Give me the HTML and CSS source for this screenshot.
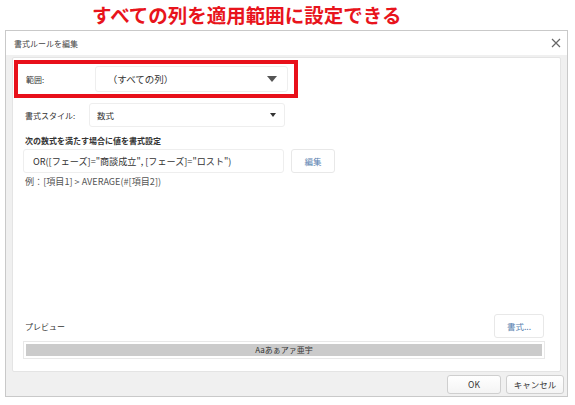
FILE: index.html
```html
<!DOCTYPE html>
<html lang="ja">
<head>
<meta charset="utf-8">
<link rel="stylesheet" href="styles.css">
</head>
<body>
<h1 class="caption">すべての列を適用範囲に設定できる</h1>
<div class="dialog">
  <div class="titlebar">
    <span class="title">書式ルールを編集</span>
    <span class="close">
      <svg width="10" height="10" viewBox="0 0 10 10"><path d="M1 1 L9 9 M9 1 L1 9" stroke="#666" stroke-width="1.2" fill="none"/></svg>
    </span>
  </div>
  <div class="body">
    <div class="panel">
      <div class="row highlight">
        <span class="label">範囲:</span>
        <div class="select big">
          <span class="sel-text">（すべての列）</span>
          <svg width="10" height="6" viewBox="0 0 10 6"><path d="M0 0 H10 L5 6 Z" fill="#555"/></svg>
        </div>
      </div>
      <div class="row style-row">
        <span class="label">書式スタイル:</span>
        <div class="select small">
          <span class="sel-text">数式</span>
          <svg width="6" height="4" viewBox="0 0 6 4"><path d="M0 0 H6 L3 4 Z" fill="#333"/></svg>
        </div>
      </div>
      <div class="section-title">次の数式を満たす場合に値を書式設定</div>
      <div class="formula-row">
        <div class="input">OR([フェーズ]="商談成立", [フェーズ]="ロスト")</div>
        <button class="btn link">編集</button>
      </div>
      <div class="hint">例：[項目1] &gt; AVERAGE(#[項目2])</div>
      <div class="spacer"></div>
      <div class="preview-head">
        <span class="label">プレビュー</span>
        <button class="btn link fmt">書式...</button>
      </div>
      <div class="preview">
        <div class="preview-inner">Aaあぁアァ亜宇</div>
      </div>
    </div>
  </div>
  <div class="footer">
    <button class="btn ok">OK</button>
    <button class="btn cancel">キャンセル</button>
  </div>
</div>
</body>
</html>
```
FILE: styles.css
```css
* { box-sizing: border-box; }
html, body { margin: 0; padding: 0; background: #fff; }
body {
  font-family: "Noto Sans CJK JP", "Noto Sans", sans-serif;
  color: #333;
  width: 575px;
  height: 405px;
  overflow: hidden;
}
.caption {
  margin: 0;
  height: 30px;
  padding: 3px 0 0 92px;
  font-size: 19.5px;
  line-height: 24px;
  font-weight: 700;
  color: #e8141c;
  letter-spacing: 0;
}
.dialog {
  margin-left: 5px;
  width: 563px;
  height: 367px;
  border: 1px solid #c9c9c9;
  background: #f0f0f0;
  display: flex;
  flex-direction: column;
}
.titlebar {
  height: 24px;
  background: #fff;
  display: flex;
  align-items: center;
  justify-content: space-between;
  padding: 0 6px 0 8px;
}
.title { font-size: 8px; color: #444; }
.close { display: flex; }
.body { padding: 2px 6px 0 6px; }
.panel {
  height: 315px;
  background: #fff;
  border: 1px solid #e4e4e4;
  border-radius: 2px;
  display: flex;
  flex-direction: column;
  padding: 0 0 0 0;
}
.row { display: flex; align-items: center; }
.label { font-size: 8px; color: #333; }
.highlight {
  margin: 2px 0 0 1px;
  width: 284px;
  height: 38px;
  border: 4px solid #e8101a;
  padding: 0 6px 0 8px;
}
.highlight .label { width: 70px; }
.select {
  display: flex;
  align-items: center;
  justify-content: space-between;
  background: #fff;
  border: 1px solid #eeeeee;
  border-radius: 3px;
}
.select.big { width: 196px; height: 26px; padding: 0 10px 0 12px; }
.select.big .sel-text { font-size: 9.5px; color: #333; }
.style-row { padding: 5px 0 0 12px; }
.style-row .label { width: 64px; }
.select.small { width: 196px; height: 24px; padding: 0 8px 0 7px; }
.select.small .sel-text { font-size: 8.5px; color: #333; }
.section-title {
  font-size: 8px;
  font-weight: 700;
  color: #333;
  padding: 8px 0 0 12px;
  line-height: 12px;
}
.formula-row { display: flex; padding: 2px 0 0 10px; gap: 7px; }
.input {
  width: 261px;
  height: 24px;
  border: 1px solid #eeeeee;
  border-radius: 3px;
  font-size: 9.1px;
  line-height: 22px;
  padding-left: 9px;
  color: #333;
  white-space: nowrap;
}
.btn {
  font-family: "Noto Sans CJK JP", "Noto Sans", sans-serif;
  background: #fff;
  border: 1px solid #e8e8e8;
  border-radius: 3px;
  padding: 0;
  cursor: default;
}
.btn.link { width: 44px; height: 24px; font-size: 8.5px; color: #5a7fb0; }
.hint { font-size: 9.1px; color: #555; padding: 2px 0 0 12px; line-height: 12px; }
.spacer { flex: 1; }
.preview-head {
  display: flex;
  align-items: center;
  justify-content: space-between;
  padding: 0 16px 0 12px;
}
.btn.fmt { width: 50px; height: 24px; }
.preview {
  margin: 3px 15px 12px 10px;
  border: 1px solid #e8e8e8;
  padding: 2px;
  height: 18px;
}
.preview-inner {
  height: 12px;
  background: #cbcbcb;
  font-size: 8px;
  line-height: 12px;
  text-align: center;
  color: #333;
}
.footer {
  flex: 1;
  display: flex;
  justify-content: flex-end;
  align-items: center;
  gap: 5px;
  padding: 0 3px 0 0;
}
.btn.ok, .btn.cancel {
  height: 19px;
  font-size: 8.5px;
  color: #333;
  border-color: #cfcfcf;
  background: linear-gradient(#fff, #f4f4f4);
}
.btn.ok { width: 54px; }
.btn.cancel { width: 58px; }
```
